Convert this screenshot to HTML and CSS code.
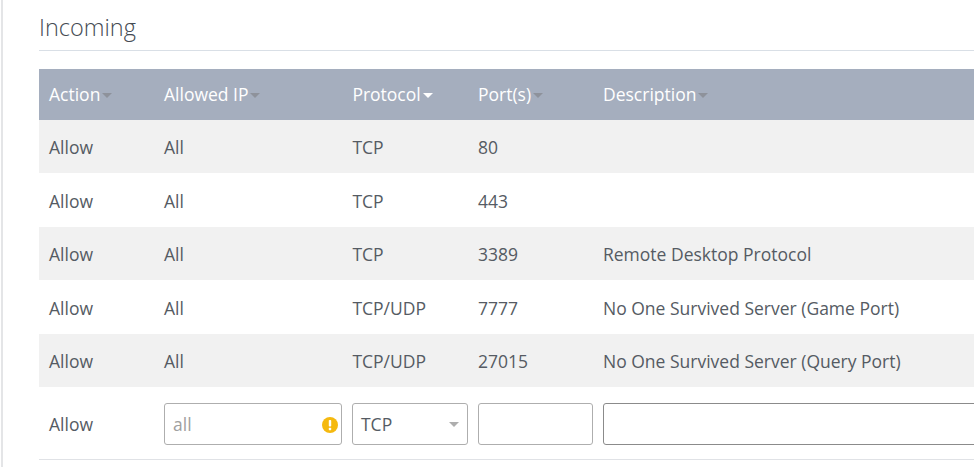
FILE: index.html
```html
<!DOCTYPE html>
<html lang="en">
<head>
<meta charset="utf-8">
<title>Incoming</title>
<link rel="stylesheet" href="styles.css">
</head>
<body>
<main class="panel">
  <h2 class="title">Incoming</h2>
  <table class="rules">
    <colgroup>
      <col class="c-action"><col class="c-ip"><col class="c-proto"><col class="c-port"><col class="c-desc">
    </colgroup>
    <thead>
      <tr>
        <th>Action<span class="caret"></span></th>
        <th>Allowed IP<span class="caret"></span></th>
        <th>Protocol<span class="caret active"></span></th>
        <th>Port(s)<span class="caret"></span></th>
        <th>Description<span class="caret"></span></th>
      </tr>
    </thead>
    <tbody>
      <tr><td>Allow</td><td>All</td><td>TCP</td><td>80</td><td></td></tr>
      <tr><td>Allow</td><td>All</td><td>TCP</td><td>443</td><td></td></tr>
      <tr><td>Allow</td><td>All</td><td>TCP</td><td>3389</td><td>Remote Desktop Protocol</td></tr>
      <tr><td>Allow</td><td>All</td><td>TCP/UDP</td><td>7777</td><td>No One Survived Server (Game Port)</td></tr>
      <tr><td>Allow</td><td>All</td><td>TCP/UDP</td><td>27015</td><td>No One Survived Server (Query Port)</td></tr>
    </tbody>
    <tfoot>
      <tr>
        <td class="static">Allow</td>
        <td>
          <div class="field">
            <input class="input with-icon" type="text" placeholder="all" aria-label="Allowed IP">
            <svg class="warn" viewBox="0 0 16 16" width="16" height="16" aria-hidden="true">
              <circle cx="8" cy="8" r="8" fill="#f5b90f"/>
              <rect x="6.8" y="3" width="2.4" height="6.6" rx="0.8" fill="#fff"/>
              <rect x="6.8" y="10.8" width="2.4" height="2.4" rx="0.6" fill="#fff"/>
            </svg>
          </div>
        </td>
        <td>
          <div class="select">TCP<span class="select-caret"></span></div>
        </td>
        <td><input class="input" type="text" aria-label="Ports"></td>
        <td class="clip"><input class="input dark" type="text" aria-label="Description"></td>
      </tr>
    </tfoot>
  </table>
</main>
</body>
</html>
```
FILE: styles.css
```css
html, body {
  margin: 0;
  padding: 0;
  background: #fff;
  overflow: hidden;
  height: 467px;
}
body {
  font-family: "Open Sans", "Liberation Sans", sans-serif;
  font-size: 17.5px;
  color: #555b63;
}
.panel {
  margin-left: 1px;
  border-left: 2px solid #e4e5e7;
  padding-left: 36px;
  width: 935px;
  height: 467px;
}
.title {
  margin: 0 0 18px;
  padding-top: 10px;
  box-sizing: border-box;
  height: 51px;
  font-size: 23.5px;
  font-weight: 300;
  line-height: 34px;
  color: #454b53;
  border-bottom: 1px solid #d9dfe6;
}
.rules {
  border-collapse: collapse;
  table-layout: fixed;
  width: 935px;
}
.c-action { width: 120px; }
.c-ip { width: 188.4px; }
.c-proto { width: 125.6px; }
.c-port { width: 125px; }
.c-desc { width: 376px; }
th, td {
  padding: 0 5px;
  text-align: left;
  font-weight: 400;
  vertical-align: middle;
}
th:first-child, td:first-child { padding-left: 10px; }
thead tr { height: 51px; background: #a5aebe; }
th { color: #fff; padding-bottom: 2px; }
tbody tr { height: 54px; }
tbody tr:nth-child(even) td { padding-top: 2px; }
tbody tr:nth-child(odd) { height: 53px; background: #f1f1f1; }
tfoot tr { height: 72px; border-bottom: 1px solid #e0e2e6; }
td.static { padding-top: 2px; }
.caret {
  display: inline-block;
  width: 0;
  height: 0;
  margin: 0 0 1px 2px;
  vertical-align: middle;
  border-left: 5px solid transparent;
  border-right: 5px solid transparent;
  border-top: 5px solid #8e929b;
}
.caret.active { border-top-color: #fff; }
.field { position: relative; }
.input, .select {
  display: block;
  width: 100%;
  height: 42px;
  box-sizing: border-box;
  margin: 2px 0 0;
  padding: 0 8px;
  border: 1px solid #aeaeae;
  border-radius: 3px;
  background: #fff;
  font: inherit;
  color: inherit;
  outline: none;
}
.clip { overflow: hidden; padding-right: 0; }
.input.with-icon { padding-right: 28px; }
.input.dark { border-color: #8b8b8b; width: calc(100% + 20px); }
.input::placeholder { color: #a0a0a0; opacity: 1; }
.warn {
  position: absolute;
  right: 4px;
  top: 14px;
}
.select {
  position: relative;
  padding-left: 7.6px;
  line-height: 40px;
}
.select-caret {
  position: absolute;
  right: 8px;
  top: 18px;
  width: 0;
  height: 0;
  border-left: 5px solid transparent;
  border-right: 5px solid transparent;
  border-top: 5px solid #aeaeae;
}
```
